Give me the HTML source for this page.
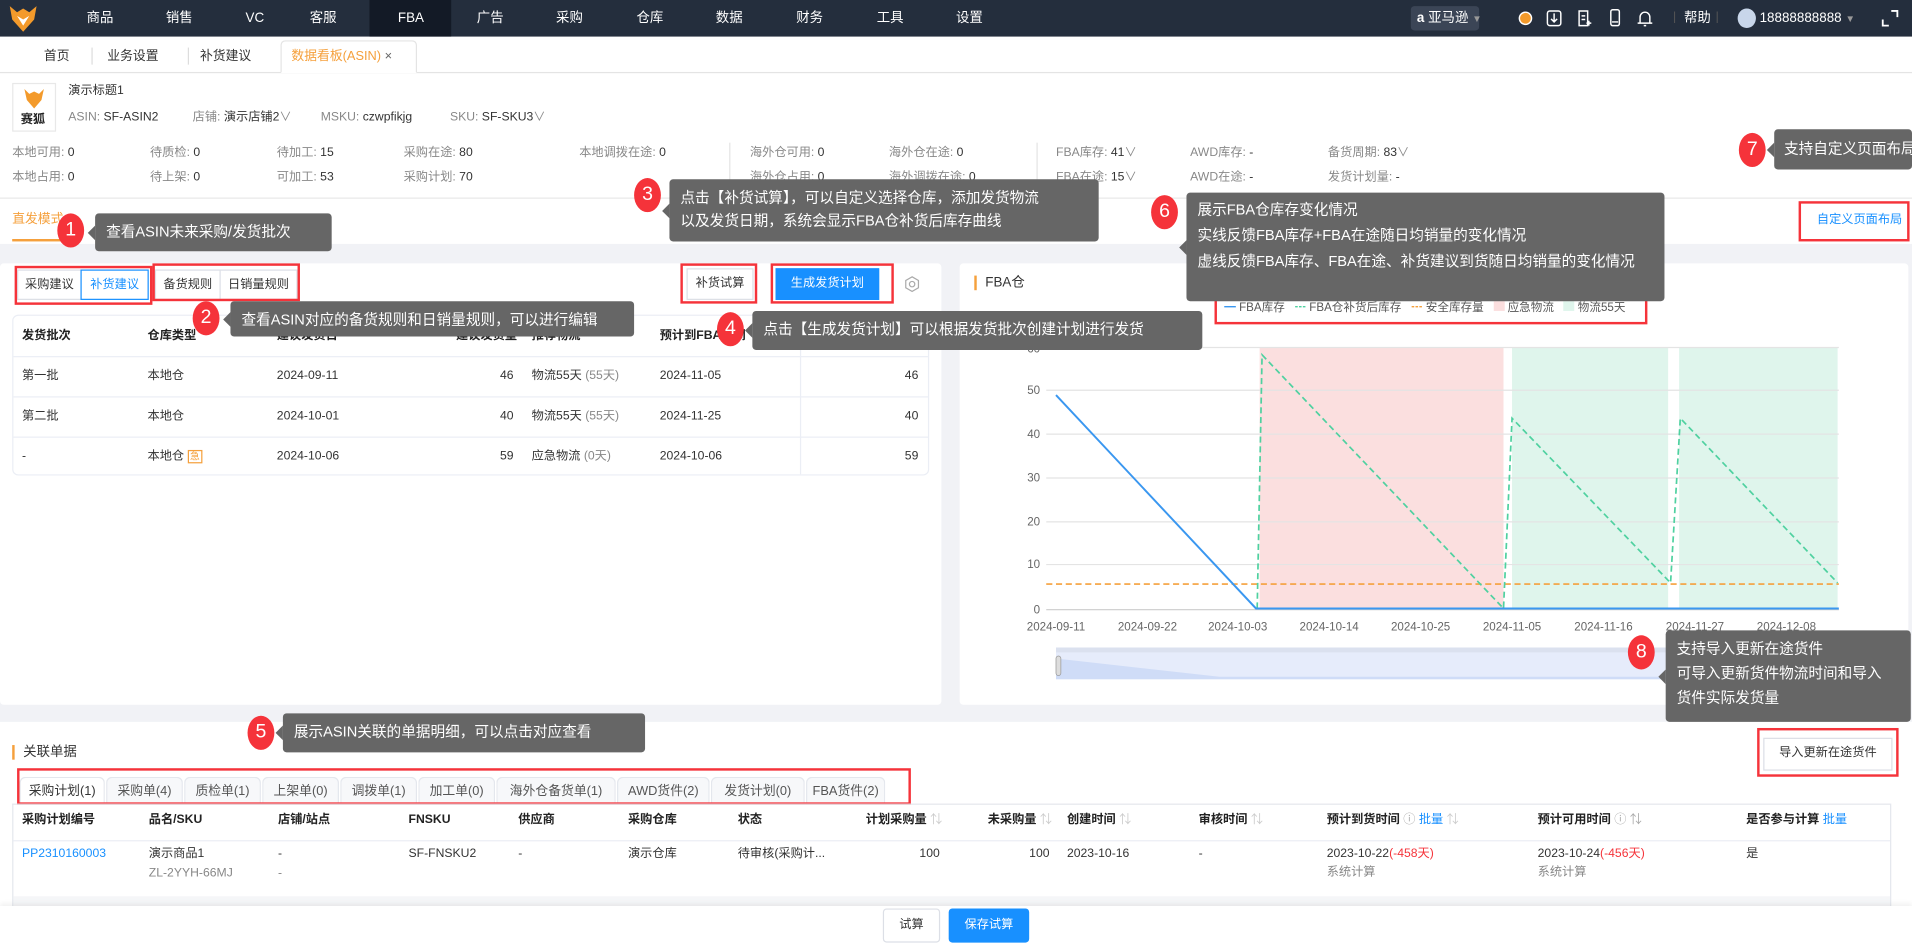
<!DOCTYPE html>
<html><head><meta charset="utf-8">
<style>
html,body{margin:0;padding:0;width:1912px;height:951px;overflow:hidden;background:#fff}
#s{position:absolute;left:0;top:0;width:1568px;height:780px;transform:scale(1.21939);transform-origin:0 0;font-family:"Liberation Sans","Noto Sans CJK SC",sans-serif;font-size:10px;color:#333}
.a{position:absolute;white-space:nowrap;line-height:12px}
.g{color:#888}
.nav{position:absolute;left:0;top:0;width:1568px;height:30px;background:#242e3d}
.nv{position:absolute;top:0;height:30px;line-height:30px;width:60px;margin-left:-30px;text-align:center;color:#fff;font-size:11px;white-space:nowrap}
.box{position:absolute;box-sizing:border-box}
.rb{position:absolute;box-sizing:border-box;border:2px solid #f5333a}
.btn{position:absolute;box-sizing:border-box;border:1px solid #dcdfe6;background:#fff;text-align:center;line-height:24px;font-size:10px;color:#333}
.tip{position:absolute;background:#666;color:#fff;border-radius:3px;font-size:12px;line-height:18px;padding:6px 9px;box-sizing:border-box;z-index:6;white-space:nowrap}
.tip:before{content:"";position:absolute;left:-6px;top:50%;margin-top:-6px;border:6px solid transparent;border-left:0;border-right-color:#666}
.bd{position:absolute;width:22px;height:28px;border-radius:50%;background:#f5333a;color:#fff;font-size:16px;line-height:28px;text-align:center;z-index:6}
.tb{position:absolute;top:637px;height:23px;box-sizing:border-box;border:1px solid #e4e7ed;border-bottom:none;border-radius:5px 5px 0 0;background:#f7f8fa;color:#555;font-size:10.5px;line-height:22px;text-align:center}
.h{font-weight:bold;color:#222}
</style></head><body><div id="s">

<!-- nav -->
<div class="nav"></div>
<svg class="a" style="left:6px;top:3px" width="26" height="25" viewBox="0 0 26 25"><path d="M2 2 L8 7 L13 4 L18 7 L24 2 L22 13 L13 23 L4 13 Z" fill="#f39a2b"/><path d="M8 10 L13 18 L18 10 L13 13 Z" fill="#fff"/></svg>
<div class="a" style="left:303px;top:0;width:67px;height:30px;background:#131a26"></div>
<div class="nv" style="left:82px">商品</div><div class="nv" style="left:147px">销售</div><div class="nv" style="left:209px">VC</div><div class="nv" style="left:265px">客服</div><div class="nv" style="left:337px">FBA</div><div class="nv" style="left:402px">广告</div><div class="nv" style="left:467px">采购</div><div class="nv" style="left:533px">仓库</div><div class="nv" style="left:598px">数据</div><div class="nv" style="left:664px">财务</div><div class="nv" style="left:730px">工具</div><div class="nv" style="left:795px">设置</div>
<div class="a" style="left:1157px;top:5px;width:56px;height:20px;background:#3b4556;border-radius:3px"></div>
<div class="a" style="left:1162px;top:9px;color:#fff;font-size:11px"><b>a</b> 亚马逊 <span style="color:#999;font-size:8px">▼</span></div>
<svg class="a" style="left:1243px;top:6px" width="120" height="18" viewBox="0 0 120 18" fill="none" stroke="#fff" stroke-width="1.2"><circle cx="8" cy="9" r="5" fill="#f39a2b" stroke="#fff"/><rect x="26" y="3" width="11" height="12" rx="2"/><path d="M31.5 5v7M29 9.5l2.5 2.5 2.5-2.5"/><path d="M52 3h7v12h-7zM54 7h3M54 10h3M58 13h4M60 11v4"/><rect x="78" y="2" width="7" height="13" rx="1.5"/><path d="M79 12h5"/><path d="M102 13V8a4 4 0 0 1 8 0v5zM100 13h12M105 15h2"/></svg>
<div class="a" style="left:1372px;top:9px;color:#555">|</div>
<div class="nv" style="left:1392px">帮助</div>
<div class="a" style="left:1407px;top:9px;color:#555">|</div>
<div class="a" style="left:1425px;top:7px;width:15px;height:16px;border-radius:50%;background:#c8d6ea"></div>
<div class="a" style="left:1443px;top:9px;color:#fff;font-size:11px">18888888888 <span style="color:#999;font-size:8px">▼</span></div>
<svg class="a" style="left:1543px;top:8px" width="14" height="14" viewBox="0 0 14 14" fill="none" stroke="#fff" stroke-width="1.5"><path d="M8 1h5v5M1 8v5h5"/></svg>

<!-- tabs -->
<div class="a" style="left:0;top:59px;width:1568px;height:1px;background:#e4e4e4"></div>
<div class="a" style="left:36px;top:40px;font-size:10.5px">首页</div>
<div class="a" style="left:75px;top:39px;width:1px;height:14px;background:#ddd"></div>
<div class="a" style="left:88px;top:40px;font-size:10.5px">业务设置</div>
<div class="a" style="left:154px;top:39px;width:1px;height:14px;background:#ddd"></div>
<div class="a" style="left:164px;top:40px;font-size:10.5px">补货建议</div>
<div class="box" style="left:230px;top:33px;width:112px;height:27px;border:1px solid #e4e4e4;border-bottom:1px solid #fff;border-radius:4px 4px 0 0;background:#fff"></div>
<div class="a" style="left:239px;top:40px;font-size:10.5px;color:#f5a03c">数据看板(ASIN) <span style="color:#666">×</span></div>

<!-- header info -->
<div class="box" style="left:10px;top:68px;width:36px;height:40px;border:1px solid #e8e8e8"></div>
<svg class="a" style="left:18px;top:71px" width="20" height="20" viewBox="0 0 20 20"><path d="M2 2L6 6L10 4L14 6L18 2L16 11L10 18L4 11Z" fill="#f39a2b"/></svg>
<div class="a h" style="left:17px;top:93px;font-size:10px">赛狐</div>
<div class="a" style="left:56px;top:69px">演示标题1</div>
<div class="a" style="left:56px;top:91px"><span class="g">ASIN:</span> SF-ASIN2</div>
<div class="a" style="left:158px;top:91px"><span class="g">店铺:</span> 演示店铺2<span class="g">∨</span></div>
<div class="a" style="left:263px;top:91px"><span class="g">MSKU:</span> czwpfikjg</div>
<div class="a" style="left:369px;top:91px"><span class="g">SKU:</span> SF-SKU3<span class="g">∨</span></div>

<div class="a" style="left:10px;top:120px"><span class="g">本地可用:</span> 0</div>
<div class="a" style="left:123px;top:120px"><span class="g">待质检:</span> 0</div>
<div class="a" style="left:227px;top:120px"><span class="g">待加工:</span> 15</div>
<div class="a" style="left:331px;top:120px"><span class="g">采购在途:</span> 80</div>
<div class="a" style="left:475px;top:120px"><span class="g">本地调拨在途:</span> 0</div>
<div class="a" style="left:598px;top:117px;width:1px;height:36px;background:#e4e4e4"></div>
<div class="a" style="left:615px;top:120px"><span class="g">海外仓可用:</span> 0</div>
<div class="a" style="left:729px;top:120px"><span class="g">海外仓在途:</span> 0</div>
<div class="a" style="left:850px;top:117px;width:1px;height:36px;background:#e4e4e4"></div>
<div class="a" style="left:866px;top:120px"><span class="g">FBA库存:</span> 41<span class="g">∨</span></div>
<div class="a" style="left:976px;top:120px"><span class="g">AWD库存:</span> -</div>
<div class="a" style="left:1089px;top:120px"><span class="g">备货周期:</span> 83<span class="g">∨</span></div>
<div class="a" style="left:10px;top:140px"><span class="g">本地占用:</span> 0</div>
<div class="a" style="left:123px;top:140px"><span class="g">待上架:</span> 0</div>
<div class="a" style="left:227px;top:140px"><span class="g">可加工:</span> 53</div>
<div class="a" style="left:331px;top:140px"><span class="g">采购计划:</span> 70</div>
<div class="a" style="left:615px;top:140px"><span class="g">海外仓占用:</span> 0</div>
<div class="a" style="left:729px;top:140px"><span class="g">海外调拨在途:</span> 0</div>
<div class="a" style="left:866px;top:140px"><span class="g">FBA在途:</span> 15<span class="g">∨</span></div>
<div class="a" style="left:976px;top:140px"><span class="g">AWD在途:</span> -</div>
<div class="a" style="left:1089px;top:140px"><span class="g">发货计划量:</span> -</div>
<div class="a" style="left:0;top:162px;width:1568px;height:1px;background:#e8e8e8"></div>

<div class="a" style="left:10px;top:174px;color:#f5a03c;font-size:10.5px">直发模式</div>
<div class="a" style="left:10px;top:196px;width:46px;height:2px;background:#f5a03c"></div>
<div class="a" style="left:1490px;top:175px;color:#1890ff">自定义页面布局</div>
<div class="rb" style="left:1475px;top:165px;width:91px;height:33px"></div>

<!-- gray bg -->
<div class="a" style="left:0;top:200px;width:1568px;height:392px;background:#f1f2f6"></div>
<div class="a" style="left:0;top:216px;width:772px;height:362px;background:#fff;border-radius:3px"></div>
<div class="a" style="left:787px;top:216px;width:778px;height:362px;background:#fff;border-radius:3px"></div>

<!-- left panel -->
<div class="btn" style="left:14px;top:221px;width:53px;height:25px">采购建议</div>
<div class="btn" style="left:66px;top:221px;width:56px;height:25px;border-color:#1890ff;color:#1890ff">补货建议</div>
<div class="btn" style="left:127px;top:221px;width:54px;height:25px">备货规则</div>
<div class="btn" style="left:180px;top:221px;width:64px;height:25px">日销量规则</div>
<div class="rb" style="left:12px;top:218px;width:113px;height:32px"></div>
<div class="rb" style="left:125px;top:216px;width:121px;height:31px"></div>
<div class="btn" style="left:563px;top:220px;width:55px;height:26px">补货试算</div>
<div class="rb" style="left:558px;top:216px;width:63px;height:33px"></div>
<div class="btn" style="left:636px;top:220px;width:85px;height:26px;background:#1890ff;border-color:#1890ff;color:#fff">生成发货计划</div>
<div class="rb" style="left:632px;top:216px;width:101px;height:33px"></div>
<svg class="a" style="left:741px;top:226px" width="14" height="14" viewBox="0 0 14 14" fill="none" stroke="#aaa"><path d="M7 1l5.2 3v6L7 13 1.8 10V4z"/><circle cx="7" cy="7" r="2.2"/></svg>

<div class="box" style="left:10px;top:258px;width:752px;height:132px;border:1px solid #ebeef5;border-radius:5px"></div>
<div class="a" style="left:11px;top:292px;width:750px;height:1px;background:#ebeef5"></div>
<div class="a" style="left:11px;top:325px;width:750px;height:1px;background:#ebeef5"></div>
<div class="a" style="left:11px;top:358px;width:750px;height:1px;background:#ebeef5"></div>
<div class="a" style="left:656px;top:259px;width:1px;height:130px;background:#ebeef5"></div>
<div class="a h" style="left:18px;top:270px">发货批次</div><div class="a h" style="left:121px;top:270px">仓库类型</div><div class="a h" style="left:227px;top:270px">建议发货日</div><div class="a h" style="left:374px;top:270px">建议发货量</div><div class="a h" style="left:436px;top:270px">推荐物流</div><div class="a h" style="left:541px;top:270px">预计到FBA时间</div><div class="a h" style="left:690px;top:270px">发货批次总量</div>
<div class="a" style="left:18px;top:303px">第一批</div><div class="a" style="left:121px;top:303px">本地仓</div><div class="a" style="left:227px;top:303px">2024-09-11</div><div class="a" style="left:410px;top:303px">46</div><div class="a" style="left:436px;top:303px">物流55天 <span class="g">(55天)</span></div><div class="a" style="left:541px;top:303px">2024-11-05</div><div class="a" style="left:742px;top:303px">46</div>
<div class="a" style="left:18px;top:336px">第二批</div><div class="a" style="left:121px;top:336px">本地仓</div><div class="a" style="left:227px;top:336px">2024-10-01</div><div class="a" style="left:410px;top:336px">40</div><div class="a" style="left:436px;top:336px">物流55天 <span class="g">(55天)</span></div><div class="a" style="left:541px;top:336px">2024-11-25</div><div class="a" style="left:742px;top:336px">40</div>
<div class="a" style="left:18px;top:369px">-</div><div class="a" style="left:121px;top:369px">本地仓 <span style="border:1px solid #f5a03c;color:#f5a03c;font-size:8px;padding:0 1px">急</span></div><div class="a" style="left:227px;top:369px">2024-10-06</div><div class="a" style="left:410px;top:369px">59</div><div class="a" style="left:436px;top:369px">应急物流 <span class="g">(0天)</span></div><div class="a" style="left:541px;top:369px">2024-10-06</div><div class="a" style="left:742px;top:369px">59</div>

<!-- right panel chart -->
<div class="a" style="left:799px;top:226px;width:2px;height:12px;background:#f5a03c"></div>
<div class="a" style="left:808px;top:226px;font-size:11px">FBA仓</div>
<div class="a" style="left:1004px;top:247px;font-size:9.5px;color:#555"><span style="color:#3a97f0">━</span> FBA库存 &nbsp; <span style="color:#4fd1a0">┅</span> FBA仓补货后库存 &nbsp; <span style="color:#f5a03c">┅</span> 安全库存量 &nbsp; <span style="display:inline-block;width:9px;height:8px;background:#fbdede"></span> 应急物流 &nbsp; <span style="display:inline-block;width:9px;height:8px;background:#dff5ec"></span> 物流55天</div>
<div class="rb" style="left:996px;top:238px;width:355px;height:28px"></div>
<svg class="a" style="left:0;top:0;z-index:2" width="1568" height="780">
<rect x="1033" y="285" width="200" height="215" fill="#fbdfdf"/>
<rect x="1240" y="285" width="128" height="215" fill="#dff5ec"/>
<rect x="1377" y="285" width="130" height="215" fill="#dff5ec"/>
<g stroke="#e4e4e4" stroke-width="1"><path d="M858 285H1508M858 320H1508M858 356H1508M858 392H1508M858 428H1508M858 463H1508"/></g>
<path d="M858 500H1508" stroke="#ccc"/>
<g fill="#666" font-size="9.5" font-family="Liberation Sans,sans-serif" text-anchor="end"><text x="853" y="289">60</text><text x="853" y="323">50</text><text x="853" y="359">40</text><text x="853" y="395">30</text><text x="853" y="431">20</text><text x="853" y="466">10</text><text x="853" y="503">0</text></g>
<g fill="#666" font-size="9.5" font-family="Liberation Sans,sans-serif" text-anchor="middle"><text x="866" y="517">2024-09-11</text><text x="941" y="517">2024-09-22</text><text x="1015" y="517">2024-10-03</text><text x="1090" y="517">2024-10-14</text><text x="1165" y="517">2024-10-25</text><text x="1240" y="517">2024-11-05</text><text x="1315" y="517">2024-11-16</text><text x="1390" y="517">2024-11-27</text><text x="1465" y="517">2024-12-08</text></g>
<path d="M858 479H1508" stroke="#f5a03c" stroke-width="1.3" stroke-dasharray="5 3"/>
<path d="M1031 499L1035 291L1233 499L1240 343L1370 478L1378 343L1507 478" fill="none" stroke="#4fd1a0" stroke-width="1.4" stroke-dasharray="5 3"/>
<path d="M866 324L1030 499H1508" fill="none" stroke="#3a97f0" stroke-width="1.6"/>
<rect x="866" y="531" width="641" height="26" fill="#e6ecfb"/>
<rect x="866" y="531" width="641" height="4" fill="#dbe1ef"/>
<path d="M866 540L1000 555H1507V557H866Z" fill="#cfdcf7"/>
<rect x="866" y="538" width="4" height="16" rx="2" fill="#ddd" stroke="#999" stroke-width=".6"/>
</svg>

<!-- bottom -->
<div class="a" style="left:10px;top:611px;width:2px;height:12px;background:#f5a03c"></div>
<div class="a" style="left:19px;top:611px;font-size:11px">关联单据</div>
<div class="btn" style="left:1446px;top:605px;width:106px;height:27px">导入更新在途货件</div>
<div class="rb" style="left:1441px;top:597px;width:116px;height:40px"></div>
<div class="tb" style="left:16px;width:70px;background:#fff;color:#333">采购计划(1)</div>
<div class="tb" style="left:87px;width:63px">采购单(4)</div>
<div class="tb" style="left:151px;width:63px">质检单(1)</div>
<div class="tb" style="left:215px;width:63px">上架单(0)</div>
<div class="tb" style="left:279px;width:63px">调拨单(1)</div>
<div class="tb" style="left:343px;width:63px">加工单(0)</div>
<div class="tb" style="left:407px;width:98px">海外仓备货单(1)</div>
<div class="tb" style="left:506px;width:76px">AWD货件(2)</div>
<div class="tb" style="left:583px;width:77px">发货计划(0)</div>
<div class="tb" style="left:661px;width:65px">FBA货件(2)</div>
<div class="rb" style="left:14px;top:630px;width:733px;height:30px"></div>
<div class="a" style="left:10px;top:659px;width:1540px;height:1px;background:#e4e7ed"></div>
<div class="a" style="left:10px;top:659px;width:1px;height:85px;background:#e4e7ed"></div>
<div class="a" style="left:1550px;top:659px;width:1px;height:85px;background:#e4e7ed"></div>
<div class="a" style="left:11px;top:689px;width:1539px;height:1px;background:#ebeef5"></div>
<div class="a" style="left:11px;top:735px;width:1539px;height:10px;background:#f5f6f8"></div>
<div class="a h" style="left:18px;top:667px">采购计划编号</div><div class="a h" style="left:122px;top:667px">品名/SKU</div><div class="a h" style="left:228px;top:667px">店铺/站点</div><div class="a h" style="left:335px;top:667px">FNSKU</div><div class="a h" style="left:425px;top:667px">供应商</div><div class="a h" style="left:515px;top:667px">采购仓库</div><div class="a h" style="left:605px;top:667px">状态</div><div class="a h" style="left:710px;top:667px">计划采购量 <span style="color:#ccc;font-weight:normal">⇅</span></div><div class="a h" style="left:810px;top:667px">未采购量 <span style="color:#ccc;font-weight:normal">⇅</span></div><div class="a h" style="left:875px;top:667px">创建时间 <span style="color:#ccc;font-weight:normal">⇅</span></div><div class="a h" style="left:983px;top:667px">审核时间 <span style="color:#ccc;font-weight:normal">⇅</span></div><div class="a h" style="left:1088px;top:667px">预计到货时间 <span style="color:#aaa;font-weight:normal">ⓘ</span> <span style="color:#1890ff;font-weight:normal">批量</span> <span style="color:#ccc;font-weight:normal">⇅</span></div><div class="a h" style="left:1261px;top:667px">预计可用时间 <span style="color:#aaa;font-weight:normal">ⓘ ⇅</span></div><div class="a h" style="left:1432px;top:667px">是否参与计算 <span style="color:#1890ff;font-weight:normal">批量</span></div>
<div class="a" style="left:18px;top:695px;color:#1890ff">PP2310160003</div>
<div class="a" style="left:122px;top:695px">演示商品1</div><div class="a g" style="left:122px;top:711px">ZL-2YYH-66MJ</div>
<div class="a" style="left:228px;top:695px">-</div><div class="a g" style="left:228px;top:711px">-</div>
<div class="a" style="left:335px;top:695px">SF-FNSKU2</div><div class="a" style="left:425px;top:695px">-</div><div class="a" style="left:515px;top:695px">演示仓库</div><div class="a" style="left:605px;top:695px">待审核(采购计...</div>
<div class="a" style="left:754px;top:695px">100</div><div class="a" style="left:844px;top:695px">100</div>
<div class="a" style="left:875px;top:695px">2023-10-16</div><div class="a" style="left:983px;top:695px">-</div>
<div class="a" style="left:1088px;top:695px">2023-10-22<span style="color:#f5333a">(-458天)</span></div><div class="a g" style="left:1088px;top:710px">系统计算</div>
<div class="a" style="left:1261px;top:695px">2023-10-24<span style="color:#f5333a">(-456天)</span></div><div class="a g" style="left:1261px;top:710px">系统计算</div>
<div class="a" style="left:1432px;top:695px">是</div>

<div class="a" style="left:0;top:743px;width:1568px;height:37px;background:#fff;box-shadow:0 -2px 4px rgba(0,0,0,.06)"></div>
<div class="btn" style="left:724px;top:745px;width:47px;height:28px;line-height:26px;border-radius:3px">试算</div>
<div class="btn" style="left:778px;top:745px;width:66px;height:28px;line-height:26px;border-radius:3px;background:#1890ff;border-color:#1890ff;color:#fff">保存试算</div>

<!-- tooltips -->
<div class="bd" style="left:47px;top:175px">1</div><div class="tip" style="left:78px;top:175px;width:194px;height:31px">查看ASIN未来采购/发货批次</div>
<div class="bd" style="left:158px;top:247px">2</div><div class="tip" style="left:189px;top:247px;width:331px;height:29px">查看ASIN对应的备货规则和日销量规则，可以进行编辑</div>
<div class="bd" style="left:520px;top:146px">3</div><div class="tip" style="left:549px;top:147px;width:352px;height:51px;line-height:19px">点击【补货试算】，可以自定义选择仓库，添加发货物流<br>以及发货日期，系统会显示FBA仓补货后库存曲线</div>
<div class="bd" style="left:588px;top:256px">4</div><div class="tip" style="left:617px;top:255px;width:369px;height:32px">点击【生成发货计划】可以根据发货批次创建计划进行发货</div>
<div class="bd" style="left:203px;top:587px">5</div><div class="tip" style="left:232px;top:585px;width:297px;height:32px">展示ASIN关联的单据明细，可以点击对应查看</div>
<div class="bd" style="left:944px;top:160px">6</div><div class="tip" style="left:973px;top:158px;width:392px;height:89px;line-height:21px;padding-top:4px">展示FBA仓库存变化情况<br>实线反馈FBA库存+FBA在途随日均销量的变化情况<br>虚线反馈FBA库存、FBA在途、补货建议到货随日均销量的变化情况</div>
<div class="bd" style="left:1426px;top:109px">7</div><div class="tip" style="left:1455px;top:106px;width:113px;height:33px;padding:7px 8px">支持自定义页面布局</div>
<div class="bd" style="left:1335px;top:521px">8</div><div class="tip" style="left:1366px;top:517px;width:201px;height:75px;line-height:20px;padding-top:5px">支持导入更新在途货件<br>可导入更新货件物流时间和导入<br>货件实际发货量</div>

</div></body></html>
